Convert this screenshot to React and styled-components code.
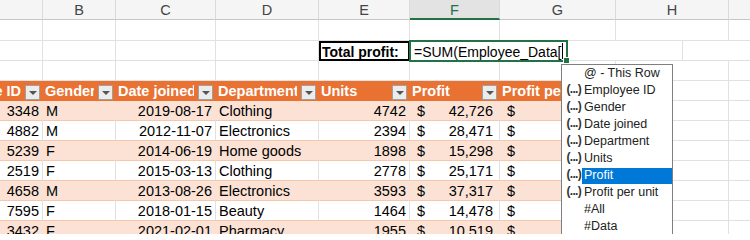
import React from 'react';
import styled, { createGlobalStyle } from 'styled-components';

const GlobalStyle = createGlobalStyle`
  html, body { margin: 0; padding: 0; background: #fff; }
  body { font-family: "Liberation Sans", Arial, sans-serif; overflow: hidden; }
`;

const GRID = '#e1e1e1';
const ORANGE = '#E97132';
const BAND = '#FBE2D5';
const BANDLINE = '#F7C7AC';
const GREEN = '#217346';

const COLS = [
  { w: 43, l: '' },
  { w: 73, l: 'B' },
  { w: 100, l: 'C' },
  { w: 103, l: 'D' },
  { w: 91, l: 'E' },
  { w: 90, l: 'F' },
  { w: 116, l: 'G' },
  { w: 113, l: 'H' },
  { w: 40, l: '' },
];

const TONES = {
  grid: { bg: '#fff', v: GRID, h: GRID },
  white: { bg: '#fff', v: GRID, h: BANDLINE },
  band: { bg: BAND, v: BAND, h: BANDLINE },
  head: { bg: ORANGE, v: ORANGE, h: ORANGE },
};

const Sheet = styled.div`
  position: relative;
  width: 750px;
  height: 234px;
  overflow: hidden;
  background: #fff;
`;

const Row = styled.div`
  display: flex;
  height: ${(p) => p.$h}px;
`;

const ColHead = styled.div`
  flex: 0 0 ${(p) => p.$w}px;
  box-sizing: border-box;
  display: flex;
  align-items: center;
  justify-content: center;
  padding-top: 1px;
  background: ${(p) => (p.$active ? '#e3e3e3' : '#f5f5f5')};
  border-right: 1px solid #dadada;
  border-bottom: ${(p) => (p.$active ? `2px solid ${GREEN}` : '1px solid #c6c6c6')};
  color: ${(p) => (p.$active ? GREEN : '#444')};
  font-size: 14.5px;
`;

const Cell = styled.div`
  position: relative;
  flex: 0 0 ${(p) => p.$w}px;
  box-sizing: border-box;
  display: flex;
  align-items: flex-end;
  justify-content: ${(p) => (p.$align === 'right' ? 'flex-end' : p.$align === 'split' ? 'space-between' : 'flex-start')};
  padding: ${(p) => (p.$align === 'split' ? '0 6px 0 7px' : '0 3px')};
  background: ${(p) => TONES[p.$tone].bg};
  border-right: 1px solid ${(p) => TONES[p.$tone].v};
  border-bottom: 1px solid ${(p) => TONES[p.$tone].h};
  font-size: 14.5px;
  line-height: 1.15;
  color: #000;
  white-space: nowrap;
  overflow: hidden;
`;

const HeadCell = styled(Cell)`
  gap: 4px;
  padding: 0 2px 0 2px;
  justify-content: ${(p) => (p.$clipLeft ? 'flex-end' : 'space-between')};
  color: #fff;
  font-weight: bold;
`;

const HeadText = styled.span`
  flex: ${(p) => (p.$clipLeft ? '0 0 auto' : '1 1 auto')};
  min-width: 0;
  overflow: hidden;
`;

const FilterBtn = styled.span`
  flex: 0 0 15px;
  height: 15px;
  box-sizing: border-box;
  border: 1px solid #a0a0a0;
  background: #ececec;
  display: flex;
  align-items: center;
  justify-content: center;
  &::after {
    content: '';
    border-left: 4px solid transparent;
    border-right: 4px solid transparent;
    border-top: 4px solid #555;
    margin-top: 1px;
  }
`;

const LabelCell = styled(Cell)`
  z-index: 1;
  font-size: 14px;
  font-weight: bold;
  outline: 2px solid #000;
  outline-offset: -2px;
`;

const ActiveCell = styled(Cell)`
  z-index: 2;
  overflow: visible;
  font-size: 14px;
  padding-left: 4px;
  outline: 2px solid ${GREEN};
  outline-offset: -1px;
`;

const Caret = styled.span`
  display: inline-block;
  width: 1px;
  height: 16px;
  margin-left: 1px;
  margin-bottom: 1px;
  background: #000;
`;

const FillHandle = styled.span`
  position: absolute;
  right: -4px;
  bottom: -4px;
  width: 5px;
  height: 5px;
  background: ${GREEN};
  border: 1px solid #fff;
`;

const Dropdown = styled.div`
  position: absolute;
  top: 64px;
  left: 561px;
  width: 112px;
  box-sizing: border-box;
  border: 1px solid #7f7f7f;
  background: #fff;
  z-index: 5;
  font-family: "Liberation Sans", Arial, sans-serif;
`;

const Item = styled.div`
  display: flex;
  height: 17px;
  font-size: 12.5px;
  line-height: 1.15;
`;

const ItemIcon = styled.span`
  flex: 0 0 20px;
  display: flex;
  align-items: center;
  justify-content: flex-end;
  padding-right: 1px;
  box-sizing: border-box;
  overflow: hidden;
  font-size: 12px;
  font-weight: bold;
  letter-spacing: -0.7px;
  color: #333;
  transform: translateY(-1.5px);
`;

const ItemLabel = styled.span`
  flex: 1 1 auto;
  display: flex;
  align-items: center;
  padding-left: 2px;
  margin: 0.5px 0;
  background: ${(p) => (p.$selected ? '#0078D7' : 'transparent')};
  color: ${(p) => (p.$selected ? '#fff' : '#222')};
  white-space: nowrap;
  overflow: hidden;
`;

const rows = [
  ['3348', 'M', '2019-08-17', 'Clothing', '4742', '42,726', '9.01'],
  ['4882', 'M', '2012-11-07', 'Electronics', '2394', '28,471', '11.89'],
  ['5239', 'F', '2014-06-19', 'Home goods', '1898', '15,298', '8.06'],
  ['2519', 'F', '2015-03-13', 'Clothing', '2778', '25,171', '9.06'],
  ['4658', 'M', '2013-08-26', 'Electronics', '3593', '37,317', '10.39'],
  ['7595', 'F', '2018-01-15', 'Beauty', '1464', '14,478', '9.89'],
  ['3432', 'F', '2021-02-01', 'Pharmacy', '1955', '10,519', '5.38'],
];

const headers = ['Employee ID', 'Gender', 'Date joined', 'Department', 'Units', 'Profit', 'Profit per unit'];

const menu = [
  { label: '@ - This Row' },
  { label: 'Employee ID', icon: true },
  { label: 'Gender', icon: true },
  { label: 'Date joined', icon: true },
  { label: 'Department', icon: true },
  { label: 'Units', icon: true },
  { label: 'Profit', icon: true, selected: true },
  { label: 'Profit per unit', icon: true },
  { label: '#All' },
  { label: '#Data' },
];

const EmptyRow = ({ h }) => (
  <Row $h={h}>
    {COLS.map((c, i) => (
      <Cell key={i} $w={c.w} $tone="grid" />
    ))}
  </Row>
);

export default function App() {
  return (
    <>
      <GlobalStyle />
      <Sheet>
        <Row $h={20}>
          {COLS.map((c, i) => (
            <ColHead key={i} $w={c.w} $active={c.l === 'F'}>
              {c.l}
            </ColHead>
          ))}
        </Row>
        <EmptyRow h={21} />
        <Row $h={20}>
          {COLS.slice(0, 4).map((c, i) => (
            <Cell key={i} $w={c.w} $tone="grid" />
          ))}
          <LabelCell $w={COLS[4].w} $tone="grid">Total profit:</LabelCell>
          <ActiveCell $w={COLS[5].w} $tone="grid">
            =SUM(Employee_Data[
            <Caret />
            <FillHandle />
          </ActiveCell>
          {COLS.slice(6).map((c, i) => (
            <Cell key={i} $w={c.w} $tone="grid" />
          ))}
        </Row>
        <EmptyRow h={20} />
        <Row $h={20}>
          {headers.map((h, i) => (
            <HeadCell key={i} $w={COLS[i].w} $tone="head" $clipLeft={i === 0}>
              <HeadText $clipLeft={i === 0}>{h}</HeadText>
              <FilterBtn />
            </HeadCell>
          ))}
          <Cell $w={COLS[7].w} $tone="grid" />
          <Cell $w={COLS[8].w} $tone="grid" />
        </Row>
        {rows.map((r, ri) => {
          const tone = ri % 2 === 0 ? 'band' : 'white';
          return (
            <Row $h={20} key={ri}>
              <Cell $w={COLS[0].w} $tone={tone} $align="right">{r[0]}</Cell>
              <Cell $w={COLS[1].w} $tone={tone}>{r[1]}</Cell>
              <Cell $w={COLS[2].w} $tone={tone} $align="right">{r[2]}</Cell>
              <Cell $w={COLS[3].w} $tone={tone}>{r[3]}</Cell>
              <Cell $w={COLS[4].w} $tone={tone} $align="right">{r[4]}</Cell>
              <Cell $w={COLS[5].w} $tone={tone} $align="split">
                <span>$</span>
                <span>{r[5]}</span>
              </Cell>
              <Cell $w={COLS[6].w} $tone={tone} $align="split">
                <span>$</span>
                <span>{r[6]}</span>
              </Cell>
              <Cell $w={COLS[7].w} $tone="grid" />
              <Cell $w={COLS[8].w} $tone="grid" />
            </Row>
          );
        })}
        <Dropdown>
          {menu.map((m, i) => (
            <Item key={i}>
              <ItemIcon>{m.icon ? '(...)' : ''}</ItemIcon>
              <ItemLabel $selected={m.selected}>{m.label}</ItemLabel>
            </Item>
          ))}
        </Dropdown>
      </Sheet>
    </>
  );
}
